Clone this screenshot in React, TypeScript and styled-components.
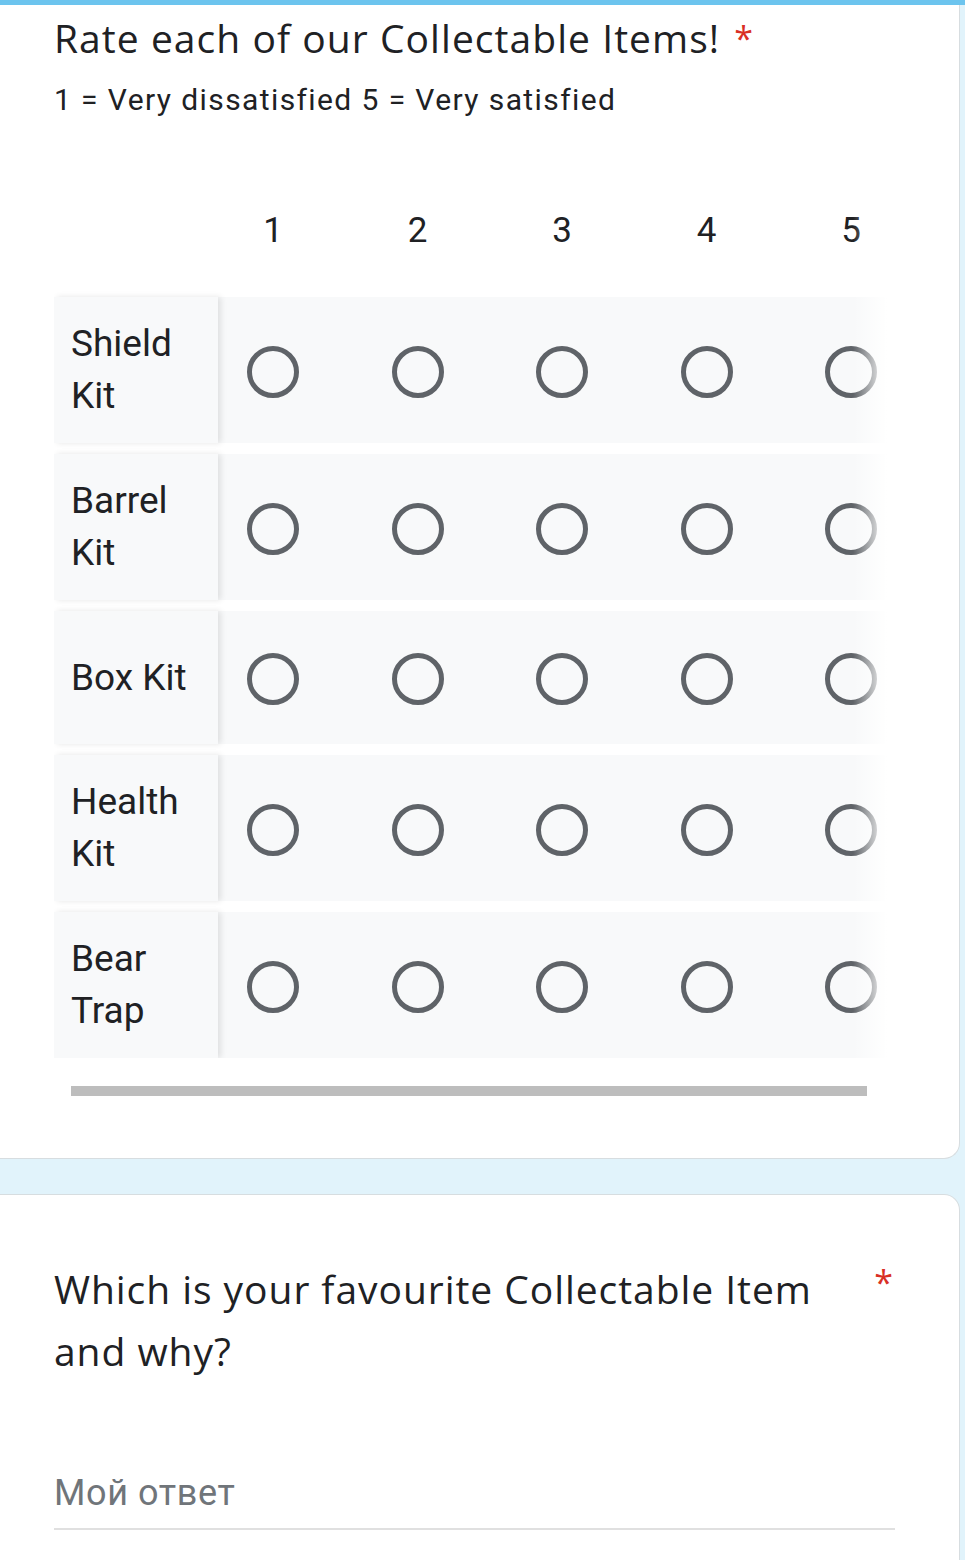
import { createGlobalStyle, styled } from "styled-components";

const items = ["Shield Kit", "Barrel Kit", "Box Kit", "Health Kit", "Bear Trap"];
const scale = [1, 2, 3, 4, 5];

const GlobalStyle = createGlobalStyle`
  html, body {
    margin: 0;
    padding: 0;
    background: #e1f3fb;
    overflow: hidden;
  }
  * {
    box-sizing: border-box;
  }
`;

const Page = styled.div`
  width: 965px;
  min-height: 1560px;
  background: #e1f3fb;
  font-family: Roboto, "Noto Sans", sans-serif;
  color: #202124;
`;

const TopBar = styled.div`
  height: 5px;
  background: #6cc4ee;
`;

const Card = styled.section<{ $first?: boolean }>`
  background: #ffffff;
  margin: ${(p) => (p.$first ? "0" : "35px")} 5px 0 -20px;
  border: 1px solid #d7dde0;
  border-left: none;
  border-top: ${(p) => (p.$first ? "none" : "1px solid #d7dde0")};
  border-radius: ${(p) => (p.$first ? "0 0 16px 0" : "0 16px 0 0")};
  padding: ${(p) => (p.$first ? "9px 0 62px 74px" : "63px 0 0 74px")};
  min-height: ${(p) => (p.$first ? "auto" : "400px")};
`;

const TitleRow = styled.div`
  display: flex;
  align-items: flex-start;
`;

const Title = styled.h2<{ $wide?: boolean }>`
  margin: 0;
  font-family: "Open Sans", "Noto Sans", sans-serif;
  font-weight: 400;
  font-size: 39px;
  line-height: ${(p) => (p.$wide ? "62px" : "48px")};
  letter-spacing: ${(p) => (p.$wide ? "0.95px" : "1.05px")};
  color: #202124;
  width: ${(p) => (p.$wide ? "790px" : "auto")};
`;

const Required = styled.span<{ $far?: boolean }>`
  color: #d93025;
  font-family: "Open Sans", sans-serif;
  font-size: 34px;
  line-height: 48px;
  margin-left: ${(p) => (p.$far ? "auto" : "14px")};
  margin-right: ${(p) => (p.$far ? "66px" : "0")};
`;

const Description = styled.p`
  margin: 18px 0 0;
  font-size: 30px;
  line-height: 40px;
  letter-spacing: 1.4px;
  color: #202124;
`;

const GridViewport = styled.div`
  position: relative;
  width: 833px;
  margin-top: 70px;
  overflow: hidden;
`;

const Fade = styled.div`
  position: absolute;
  top: 0;
  right: 0;
  width: 34px;
  height: 100%;
  background: linear-gradient(to right, rgba(255, 255, 255, 0), #ffffff);
  pointer-events: none;
`;

const GridRows = styled.div`
  display: flex;
  flex-direction: column;
  gap: 11px;
  width: 890px;
`;

const HeaderRow = styled.div`
  display: grid;
  grid-template-columns: 164px repeat(5, 144.5px);
  height: 82px;
  align-items: center;
  margin-bottom: 14px;
`;

const ColumnLabel = styled.div`
  font-size: 35px;
  line-height: 40px;
  width: 110px;
  text-align: center;
`;

const Row = styled.div`
  display: grid;
  grid-template-columns: 164px repeat(5, 144.5px);
  min-height: 133px;
  background: #f8f9fa;
`;

const RowLabel = styled.div`
  display: flex;
  align-items: center;
  padding: 21px 12px 21px 17px;
  font-size: 37px;
  line-height: 52px;
  background: #f8f9fa;
  box-shadow: 3px 0 6px rgba(0, 0, 0, 0.1);
  position: relative;
  z-index: 1;
`;

const Cell = styled.div`
  display: flex;
  align-items: center;
  padding: 3px 0 0 29px;
`;

const Radio = styled.span`
  width: 52px;
  height: 52px;
  border-radius: 50%;
  border: 5px solid #5f6368;
`;

const Scrollbar = styled.div`
  width: 796px;
  height: 10px;
  margin: 28px 0 0 17px;
  background: #bdbdbd;
`;

const AnswerInput = styled.div`
  width: 841px;
  margin-top: 89px;
  padding-bottom: 13px;
  border-bottom: 2px solid #e0e0e0;
  font-size: 36px;
  line-height: 44px;
  letter-spacing: 0.6px;
  color: #70757a;
`;

export default function App() {
  return (
    <Page>
      <GlobalStyle />
      <TopBar />
      <Card $first>
        <TitleRow>
          <Title>Rate each of our Collectable Items!</Title>
          <Required>*</Required>
        </TitleRow>
        <Description>1 = Very dissatisfied 5 = Very satisfied</Description>
        <GridViewport>
          <GridRows>
            <HeaderRow>
              <span />
              {scale.map((n) => (
                <ColumnLabel key={n}>{n}</ColumnLabel>
              ))}
            </HeaderRow>
            {items.map((item) => (
              <Row key={item}>
                <RowLabel>{item}</RowLabel>
                {scale.map((n) => (
                  <Cell key={n}>
                    <Radio />
                  </Cell>
                ))}
              </Row>
            ))}
          </GridRows>
          <Fade />
        </GridViewport>
        <Scrollbar />
      </Card>
      <Card>
        <TitleRow>
          <Title $wide>Which is your favourite Collectable Item and why?</Title>
          <Required $far>*</Required>
        </TitleRow>
        <AnswerInput>Мой ответ</AnswerInput>
      </Card>
    </Page>
  );
}
